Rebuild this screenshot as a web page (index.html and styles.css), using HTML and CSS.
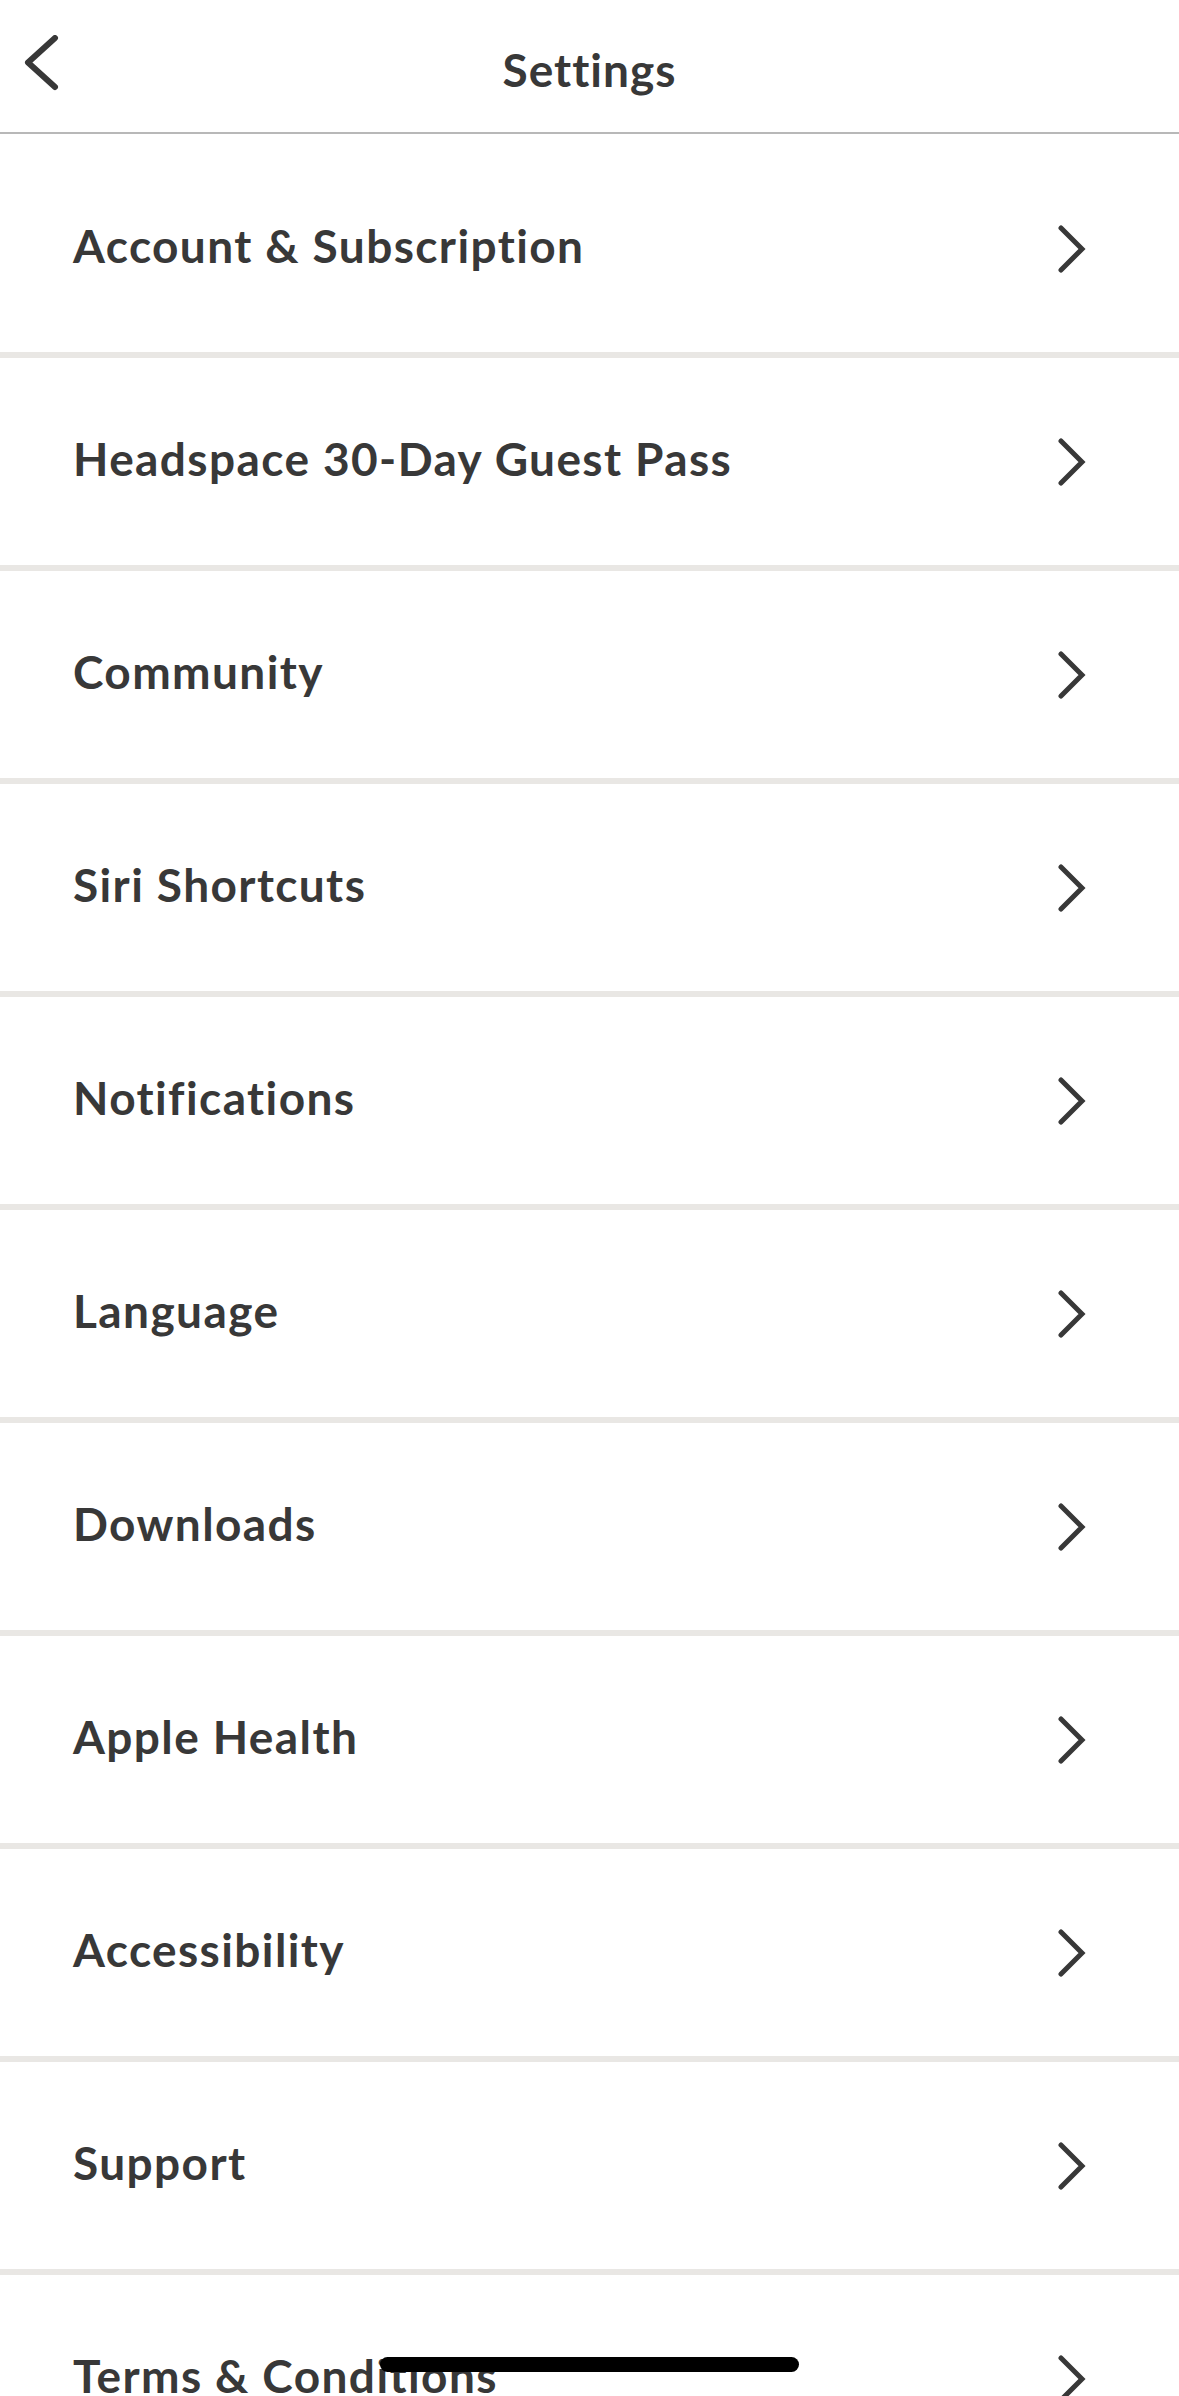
FILE: index.html
```html
<!DOCTYPE html>
<html lang="en">
<head>
<meta charset="utf-8">
<title>Settings</title>
<link rel="stylesheet" href="styles.css">
</head>
<body>
<div class="screen">
  <header class="header">
    <button class="back" aria-label="Back">
      <svg width="40" height="62" viewBox="0 0 40 62"><polyline points="33,3 6,27.5 33,52" fill="none" stroke="#383838" stroke-width="6" stroke-linecap="round" stroke-linejoin="round"/></svg>
    </button>
    <h1 class="title">Settings</h1>
  </header>
  <ul class="list">
    <li class="row"><span class="label">Account &amp; Subscription</span><svg class="chev" width="30" height="48" viewBox="0 0 30 48"><polyline points="4,3 25,24 4,45" fill="none" stroke="#383838" stroke-width="5" stroke-linecap="round" stroke-linejoin="miter"/></svg></li>
    <li class="row"><span class="label">Headspace 30-Day Guest Pass</span><svg class="chev" width="30" height="48" viewBox="0 0 30 48"><polyline points="4,3 25,24 4,45" fill="none" stroke="#383838" stroke-width="5" stroke-linecap="round" stroke-linejoin="miter"/></svg></li>
    <li class="row"><span class="label">Community</span><svg class="chev" width="30" height="48" viewBox="0 0 30 48"><polyline points="4,3 25,24 4,45" fill="none" stroke="#383838" stroke-width="5" stroke-linecap="round" stroke-linejoin="miter"/></svg></li>
    <li class="row"><span class="label">Siri Shortcuts</span><svg class="chev" width="30" height="48" viewBox="0 0 30 48"><polyline points="4,3 25,24 4,45" fill="none" stroke="#383838" stroke-width="5" stroke-linecap="round" stroke-linejoin="miter"/></svg></li>
    <li class="row"><span class="label">Notifications</span><svg class="chev" width="30" height="48" viewBox="0 0 30 48"><polyline points="4,3 25,24 4,45" fill="none" stroke="#383838" stroke-width="5" stroke-linecap="round" stroke-linejoin="miter"/></svg></li>
    <li class="row"><span class="label">Language</span><svg class="chev" width="30" height="48" viewBox="0 0 30 48"><polyline points="4,3 25,24 4,45" fill="none" stroke="#383838" stroke-width="5" stroke-linecap="round" stroke-linejoin="miter"/></svg></li>
    <li class="row"><span class="label">Downloads</span><svg class="chev" width="30" height="48" viewBox="0 0 30 48"><polyline points="4,3 25,24 4,45" fill="none" stroke="#383838" stroke-width="5" stroke-linecap="round" stroke-linejoin="miter"/></svg></li>
    <li class="row"><span class="label">Apple Health</span><svg class="chev" width="30" height="48" viewBox="0 0 30 48"><polyline points="4,3 25,24 4,45" fill="none" stroke="#383838" stroke-width="5" stroke-linecap="round" stroke-linejoin="miter"/></svg></li>
    <li class="row"><span class="label">Accessibility</span><svg class="chev" width="30" height="48" viewBox="0 0 30 48"><polyline points="4,3 25,24 4,45" fill="none" stroke="#383838" stroke-width="5" stroke-linecap="round" stroke-linejoin="miter"/></svg></li>
    <li class="row"><span class="label">Support</span><svg class="chev" width="30" height="48" viewBox="0 0 30 48"><polyline points="4,3 25,24 4,45" fill="none" stroke="#383838" stroke-width="5" stroke-linecap="round" stroke-linejoin="miter"/></svg></li>
    <li class="row"><span class="label">Terms &amp; Conditions</span><svg class="chev" width="30" height="48" viewBox="0 0 30 48"><polyline points="4,3 25,24 4,45" fill="none" stroke="#383838" stroke-width="5" stroke-linecap="round" stroke-linejoin="miter"/></svg></li>
  </ul>
  <div class="home-indicator"></div>
</div>
</body>
</html>
```

FILE: styles.css
```css
* { box-sizing: border-box; }
html, body {
  margin: 0;
  padding: 0;
  background: #ffffff;
}
body {
  width: 1179px;
  height: 2396px;
  overflow: hidden;
  font-family: "Lato", "Noto Sans", sans-serif;
  color: #383838;
}
.screen {
  position: relative;
  width: 1179px;
  height: 2396px;
  overflow: hidden;
}
.header {
  position: relative;
  height: 134px;
  border-bottom: 2px solid #b8b8b8;
  display: flex;
  justify-content: center;
}
.back {
  position: absolute;
  left: 22px;
  top: 35px;
  padding: 0;
  margin: 0;
  border: 0;
  background: none;
  display: block;
}
.back svg { display: block; }
.title {
  margin: 0;
  padding-top: 40px;
  font-size: 46px;
  line-height: 60px;
  font-weight: 700;
  letter-spacing: 1px;
  color: #383838;
}
.list {
  list-style: none;
  margin: 0;
  padding: 6px 0 0 0;
}
.row {
  height: 213px;
  border-bottom: 6px solid #e9e7e4;
  display: flex;
  align-items: center;
  justify-content: space-between;
  padding: 0 92px 6px 73px;
}
.row:first-child {
  height: 218px;
  padding-bottom: 0;
}
.label {
  font-size: 46px;
  font-weight: 700;
  line-height: 56px;
  letter-spacing: 1.4px;
  color: #383838;
}
.chev {
  display: block;
  margin-top: 6px;
}
.home-indicator {
  position: absolute;
  left: 380px;
  bottom: 24px;
  width: 419px;
  height: 15px;
  border-radius: 8px;
  background: #000;
}
```
